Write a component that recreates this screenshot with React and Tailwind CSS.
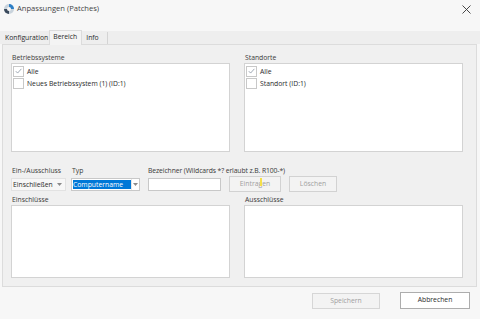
import React from "react";

const Check = () => (
  <svg width="10" height="10" viewBox="0 0 10 10" className="block">
    <polyline points="2,5.2 4,7.3 8.2,2.6" fill="none" stroke="#8a94a3" strokeWidth="0.9" />
  </svg>
);

const Arrow = () => (
  <svg width="5" height="3" viewBox="0 0 5 3" className="block">
    <polygon points="0,0 5,0 2.5,3" fill="#8a8a8a" />
  </svg>
);

function Item({ checked, label }) {
  return (
    <div className="flex items-center h-[12px] pl-[1px]">
      <div className="w-[11px] h-[11px] border border-[#c8c8c8] bg-white flex items-center justify-center">
        {checked ? <Check /> : null}
      </div>
      <span className="ml-[3px] leading-[11px] text-[#2a2a2a]">{label}</span>
    </div>
  );
}

export default function App() {
  return (
    <div
      className="w-[480px] h-[319px] bg-[#f7f7f7] flex flex-col overflow-hidden relative text-[6.8px] text-[#3a3a3a]"
      style={{ fontFamily: '"Open Sans", "Noto Sans", sans-serif' }}
    >
      {/* title bar */}
      <div className="h-[31px] flex items-start justify-between pl-[3px] pr-[9px] pt-[2px]">
        <div className="flex items-center h-[13px]">
          <svg width="12" height="12" viewBox="0 0 12 12" className="block">
            <circle cx="6" cy="6" r="5" fill="#c9d3dc" />
            <path d="M6 1 A5 5 0 0 1 11 6 L6 6 Z" fill="#2d7fc6" />
            <path d="M1 6 A5 5 0 0 0 6 11 L6 6 Z" fill="#3b4a5c" />
            <circle cx="6" cy="6" r="2" fill="#f7f7f7" />
          </svg>
          <span className="ml-[2px] text-[7.6px] leading-[13px] text-[#444]">Anpassungen (Patches)</span>
        </div>
        <svg width="9" height="9" viewBox="0 0 9 9" className="block mt-[3px]">
          <path d="M0.5 0.5 L8.5 8.5 M8.5 0.5 L0.5 8.5" stroke="#333" strokeWidth="0.9" />
        </svg>
      </div>

      {/* tab strip */}
      <div className="h-[13px] flex items-end pl-[2px] bg-[#eeeeee]">
        <div className="h-[12px] pl-[3px] pr-[1px] flex items-center text-[#2a2a2a] leading-[12px]">
          Konfiguration
        </div>
        <div className="h-[15px] px-[3px] w-[33px] pb-[3px] flex items-center bg-[#f4f4f4] border-x border-t border-[#dcdcdc] text-[#2a2a2a] leading-[12px] -mb-[1px] relative z-10">
          Bereich
        </div>
        <div className="h-[12px] pl-[4px] w-[26px] flex items-center border-r border-[#d4d4d4] text-[#2a2a2a] leading-[12px]">
          Info
        </div>
      </div>

      {/* panel */}
      <div className="mx-[2px] w-[475px] h-[243px] border border-[#dcdcdc] bg-[#f0f0f0] flex flex-col pl-[8px] pt-[7px]">
        <div className="flex gap-[14px]">
          <div className="flex flex-col w-[219px]">
            <div className="leading-[11px] pl-[1px]">Betriebssysteme</div>
            <div className="h-[89px] border border-[#d3d3d3] bg-white pt-[1px] flex flex-col">
              <Item checked label="Alle" />
              <Item label="Neues Betriebssystem (1) (ID:1)" />
            </div>
          </div>
          <div className="flex flex-col w-[219px]">
            <div className="leading-[11px] pl-[1px]">Standorte</div>
            <div className="h-[89px] border border-[#d3d3d3] bg-white pt-[1px] flex flex-col">
              <Item checked label="Alle" />
              <Item label="Standort (ID:1)" />
            </div>
          </div>
        </div>

        {/* middle row */}
        <div className="flex items-end mt-[12px] h-[28px]">
          <div className="flex flex-col w-[55px]">
            <div className="leading-[11px] pl-[1px] mb-[2px] whitespace-nowrap">Ein-/Ausschluss</div>
            <div className="h-[13px] mb-[1px] border border-[#e2e2e2] bg-[#f7f7f7] flex items-center justify-between pl-[1px] pr-[3px]">
              <span className="leading-[11px] text-[#2a2a2a]">Einschließen</span>
              <Arrow />
            </div>
          </div>
          <div className="flex flex-col w-[69px] ml-[5px]">
            <div className="leading-[11px] pl-[1px] mb-[2px]">Typ</div>
            <div className="h-[13px] mb-[1px] border border-[#c8c8c8] bg-white flex items-center pl-[1px]">
              <span className="bg-[#0078d7] text-white leading-[9px] h-[9px] w-[58px] flex items-center">Computername</span>
              <div className="flex-1 flex items-center justify-center h-full border-l border-[#e6e6e6]">
                <Arrow />
              </div>
            </div>
          </div>
          <div className="flex flex-col w-[73px] ml-[8px]">
            <div className="leading-[11px] mb-[2px] whitespace-nowrap tracking-[-0.1px]">Bezeichner (Wildcards *? erlaubt z.B. R100-*)</div>
            <div className="h-[13px] mb-[1px] border border-[#c8c8c8] bg-white" />
          </div>
          <div className="ml-[8px] w-[52px] h-[16px] border border-[#d2d2d2] bg-[#f3f3f3] flex items-center justify-center text-[#a0a0a0] relative">
            Eintragen
            <div className="absolute left-[30px] top-[1px] w-[2px] h-[8px] bg-[#f5e04a]" />
          </div>
          <div className="ml-[8px] w-[48px] h-[16px] border border-[#d2d2d2] bg-[#f3f3f3] flex items-center justify-center text-[#a0a0a0]">
            Löschen
          </div>
        </div>

        <div className="flex gap-[14px] mt-[2px]">
          <div className="flex flex-col w-[219px]">
            <div className="leading-[11px] pl-[1px]">Einschlüsse</div>
            <div className="h-[73px] border border-[#d3d3d3] bg-white" />
          </div>
          <div className="flex flex-col w-[219px]">
            <div className="leading-[11px] pl-[1px]">Ausschlüsse</div>
            <div className="h-[73px] border border-[#d3d3d3] bg-white" />
          </div>
        </div>
      </div>

      {/* footer */}
      <div className="flex justify-end pr-[10px] mt-[6px] gap-[20px]">
        <div className="w-[68px] h-[16px] border border-[#d6d6d6] bg-[#f3f3f3] flex items-center justify-center text-[#a0a0a0]">
          Speichern
        </div>
        <div className="w-[70px] h-[17px] -mt-[1px] border border-[#adadad] bg-white flex items-center justify-center text-[#2a2a2a]">
          Abbrechen
        </div>
      </div>
    </div>
  );
}
